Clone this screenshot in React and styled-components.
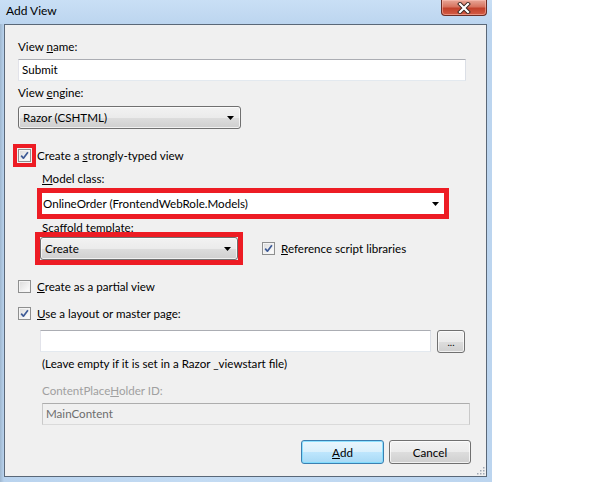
import React from 'react';
import styled, { createGlobalStyle } from 'styled-components';

const GlobalStyle = createGlobalStyle`
	html, body {
		margin: 0;
		padding: 0;
		background: #ffffff;
	}
	body {
		font-family: Lato, 'Liberation Sans', sans-serif;
		font-size: 11.6px;
		color: #000000;
	}
`;

const CheckMark = () => (
	<svg width="11" height="11" viewBox="0 0 11 11">
		<path d="M2.2 5.6 L4.4 8.2 L8.9 2.2" fill="none" stroke="#3d5a96" strokeWidth="1.7" strokeLinejoin="round" />
	</svg>
);

const Arrow = () => (
	<svg width="7" height="4" viewBox="0 0 7 4">
		<path d="M0 0 H7 L3.5 4 Z" fill="#000000" />
	</svg>
);

const CloseIcon = () => (
	<svg width="14" height="12" viewBox="0 0 14 12">
		<path d="M3 2 L11 10 M11 2 L3 10" stroke="#3a2520" strokeWidth="4" strokeLinecap="square" />
		<path d="M3 2 L11 10 M11 2 L3 10" stroke="#ffffff" strokeWidth="2.2" strokeLinecap="square" />
	</svg>
);

const Check = ({ checked, label }) => (
	<CheckRow>
		<Box>{checked && <CheckMark />}</Box>
		<span>
			<u>{label[0]}</u>
			{label.slice(1)}
		</span>
	</CheckRow>
);

const App = () => {
	return (
		<>
			<GlobalStyle />
			<Window>
				<TitleBar>
					<Title>Add View</Title>
					<CloseButton>
						<CloseIcon />
					</CloseButton>
				</TitleBar>
				<Client>
					<Label $mt={14}>
						View <u>n</u>ame:
					</Label>
					<TextField $mt={5} $width={448}>
						Submit
					</TextField>
					<Label $mt={4}>
						View <u>e</u>ngine:
					</Label>
					<Combo $mt={6} $width={223}>
						<span>Razor (CSHTML)</span>
						<Arrow />
					</Combo>

					<CheckRow $mt={19}>
						<Box $highlight>
							<CheckMark />
						</Box>
						<span>
							Create a <u>s</u>trongly-typed view
						</span>
					</CheckRow>

					<Indent>
						<Label $mt={8}>
							<u>M</u>odel class:
						</Label>
						<Field $mt={7} $width={402}>
							<span>OnlineOrder (FrontendWebRole.Models)</span>
							<Arrow />
						</Field>
						<Label $mt={6}>Scaffold template:</Label>
						<TemplateRow>
							<Highlight>
								<Combo $width={198}>
									<span>Create</span>
									<Arrow />
								</Combo>
							</Highlight>
							<Check checked label="Reference script libraries" />
						</TemplateRow>
					</Indent>

					<CheckList>
						<Check label="Create as a partial view" />
						<Check checked label="Use a layout or master page:" />
					</CheckList>

					<Indent>
						<BrowseRow>
							<TextField $width={391}></TextField>
							<SmallButton>...</SmallButton>
						</BrowseRow>
						<Label $mt={3}>(Leave empty if it is set in a Razor _viewstart file)</Label>
						<Label $mt={12} $disabled>
							ContentPlace<u>H</u>older ID:
						</Label>
						<TextField $mt={5} $width={428} $disabled>
							MainContent
						</TextField>
					</Indent>

					<Actions>
						<Button $primary>
							<u>A</u>dd
						</Button>
						<Button>Cancel</Button>
					</Actions>
					<Grip>
						<svg width="9" height="9" viewBox="0 0 9 9">
							{[
								[7, 1],
								[7, 4],
								[4, 4],
								[7, 7],
								[4, 7],
								[1, 7],
							].map(([x, y]) => (
								<rect key={`${x}-${y}`} x={x} y={y} width="1.5" height="1.5" fill="#a0a8b4" />
							))}
						</svg>
					</Grip>
				</Client>
			</Window>
		</>
	);
};

const Window = styled.div`
	width: 492px;
	height: 482px;
	display: flex;
	flex-direction: column;
	background: linear-gradient(90deg, #9fb7cf 0px, #b9d3ee 4px, #c3dbf3 40%, #bcd5ef 100%);
`;

const TitleBar = styled.div`
	height: 24px;
	display: flex;
	justify-content: space-between;
	align-items: flex-start;
	padding-left: 6px;
	padding-right: 5px;
	background: linear-gradient(180deg, #c9dff5 0%, #bcd5ef 100%);
`;

const Title = styled.div`
	font-size: 12px;
	line-height: 16px;
	padding-top: 3px;
	color: #000000;
`;

const CloseButton = styled.div`
	width: 44px;
	height: 15px;
	border: 1px solid #6b2d25;
	border-top: none;
	border-radius: 0 0 4px 4px;
	display: flex;
	align-items: center;
	justify-content: center;
	background: linear-gradient(180deg, #e8a797 0%, #d7735f 45%, #c2412b 55%, #d45c45 100%);
	box-shadow: inset 0 0 0 1px rgba(255, 200, 190, 0.5);
`;

const Client = styled.div`
	position: relative;
	flex: 1;
	margin: 0 5px 5px 4px;
	border: 1px solid #5a6878;
	background: #f0f0f0;
	display: flex;
	flex-direction: column;
	padding-left: 13px;
`;

const Label = styled.div`
	line-height: 15px;
	margin-top: ${(p) => p.$mt || 0}px;
	color: ${(p) => (p.$disabled ? '#a0a0a0' : '#000000')};
	white-space: nowrap;
`;

const TextField = styled.div`
	box-sizing: border-box;
	width: ${(p) => p.$width}px;
	height: 22px;
	margin-top: ${(p) => p.$mt || 0}px;
	padding: 0 3px;
	line-height: 20px;
	border: 1px solid;
	border-color: #abadb3 #dbdfe6 #e3e9ef #e2e3ea;
	background: ${(p) => (p.$disabled ? '#f0f0f0' : '#ffffff')};
	color: ${(p) => (p.$disabled ? '#6d6d6d' : '#000000')};
	${(p) => p.$disabled && 'border-color: #adadad #c9c9c9 #dadada #c9c9c9;'}
`;

const Combo = styled.div`
	box-sizing: border-box;
	width: ${(p) => p.$width}px;
	height: 23px;
	margin-top: ${(p) => p.$mt || 0}px;
	padding: 0 6px 0 4px;
	display: flex;
	align-items: center;
	justify-content: space-between;
	border: 1px solid #707070;
	border-radius: 3px;
	background: linear-gradient(180deg, #f2f2f2 0%, #ebebeb 50%, #dddddd 51%, #cfcfcf 100%);
	box-shadow: inset 0 0 0 1px rgba(255, 255, 255, 0.7);
`;

const Highlight = styled.div`
	display: flex;
	outline: 5px solid #ed1c24;
`;

const Field = styled.div`
	box-sizing: border-box;
	width: ${(p) => p.$width}px;
	height: 21px;
	margin-top: ${(p) => p.$mt || 0}px;
	padding: 0 5px 0 1px;
	display: flex;
	align-items: center;
	justify-content: space-between;
	background: #ffffff;
	outline: 5px solid #ed1c24;
`;

const Indent = styled.div`
	display: flex;
	flex-direction: column;
	padding-left: 24px;
`;

const TemplateRow = styled.div`
	display: flex;
	align-items: center;
	gap: 24px;
	margin-top: 2px;
	margin-left: -2px;
`;

const CheckRow = styled.div`
	display: flex;
	align-items: center;
	gap: 6px;
	line-height: 15px;
	margin-top: ${(p) => p.$mt || 0}px;
	white-space: nowrap;
`;

const Box = styled.div`
	box-sizing: border-box;
	width: 13px;
	height: 13px;
	flex: none;
	display: flex;
	align-items: center;
	justify-content: center;
	border: 1px solid #8e8f8f;
	background: linear-gradient(135deg, #dadada 0%, #f1f1f1 60%, #ffffff 100%);
	box-shadow: inset 0 0 0 1px #f4f4f4;
	${(p) => p.$highlight && 'outline: 4px solid #ed1c24; outline-offset: 1px;'}
`;

const CheckList = styled.div`
	display: flex;
	flex-direction: column;
	gap: 12px;
	margin-top: 19px;
`;

const BrowseRow = styled.div`
	display: flex;
	align-items: flex-start;
	gap: 6px;
	margin-top: 9px;
	margin-left: -2px;
`;

const SmallButton = styled.div`
	box-sizing: border-box;
	width: 28px;
	height: 23px;
	display: flex;
	align-items: center;
	justify-content: center;
	font-size: 10px;
	border: 1px solid #707070;
	border-radius: 3px;
	background: linear-gradient(180deg, #f2f2f2 0%, #ebebeb 50%, #dddddd 51%, #cfcfcf 100%);
	box-shadow: inset 0 0 0 1px rgba(255, 255, 255, 0.7);
`;

const Actions = styled.div`
	display: flex;
	justify-content: flex-end;
	gap: 5px;
	margin-top: 15px;
	padding-right: 15px;
`;

const Button = styled.div`
	box-sizing: border-box;
	width: ${(p) => (p.$primary ? 83 : 82)}px;
	height: 24px;
	display: flex;
	align-items: center;
	justify-content: center;
	border: 1px solid ${(p) => (p.$primary ? '#3c7fb1' : '#707070')};
	border-radius: 3px;
	background: ${(p) =>
		p.$primary
			? 'linear-gradient(180deg, #eaf6fd 0%, #d9f0fc 50%, #bee6fd 51%, #a7d9f5 100%)'
			: 'linear-gradient(180deg, #f2f2f2 0%, #ebebeb 50%, #dddddd 51%, #cfcfcf 100%)'};
	box-shadow: inset 0 0 0 1px ${(p) => (p.$primary ? 'rgba(120, 220, 255, 0.8)' : 'rgba(255, 255, 255, 0.7)')};
`;

const Grip = styled.div`
	position: absolute;
	right: 1px;
	bottom: 1px;
	display: flex;
`;

export default App;
